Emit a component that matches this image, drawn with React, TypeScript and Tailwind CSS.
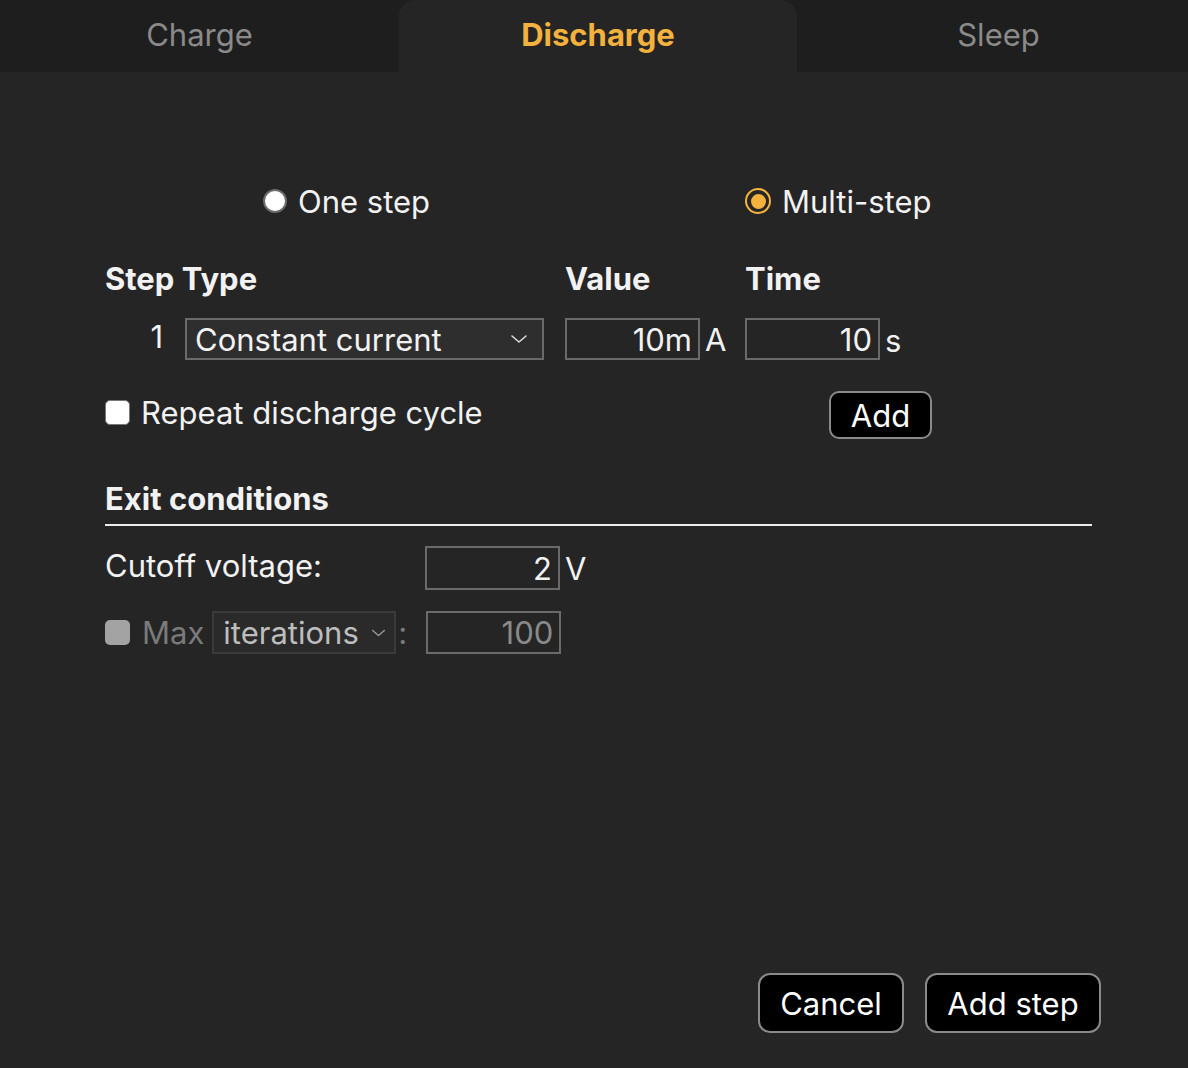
import React from "react";

const Chevron = ({ className = "" }: { className?: string }) => (
  <svg className={className} width="18" height="10" viewBox="0 0 18 10" fill="none">
    <path d="M2 2 L9 8 L16 2" stroke="currentColor" strokeWidth="1.6" strokeLinecap="round" strokeLinejoin="round" />
  </svg>
);

export default function App() {
  return (
    <div
      className="min-h-[1068px] w-[1188px] bg-[#252525] text-[#f2f2f2] flex flex-col"
      style={{ fontFamily: "Inter, 'Noto Sans', sans-serif" }}
    >
      {/* Tabs */}
      <div className="flex h-[72px] bg-[#1e1e1e] shrink-0">
        <div className="w-[399px] flex items-center justify-center text-[31px] text-[#8a8a8a] pb-[2px]">Charge</div>
        <div className="w-[398px] flex items-center justify-center text-[31px] font-bold text-[#f3b13e] bg-[#252525] rounded-t-[16px] pb-[2px]">Discharge</div>
        <div className="flex-1 flex items-center justify-center text-[31px] text-[#8a8a8a] pb-[2px] pl-[12px]">Sleep</div>
      </div>

      <div className="flex-1 flex flex-col pl-[105px] pr-[96px]">
        {/* Radios */}
        <div className="flex items-center h-[40px] mt-[109px]">
          <div className="ml-[158px] w-[482px] flex items-center">
            <span className="w-[24px] h-[24px] rounded-full bg-white border-2 border-[#6b6b6b]" />
            <span className="ml-[11px] text-[31px] leading-none">One step</span>
          </div>
          <div className="flex items-center">
            <span className="w-[26px] h-[26px] rounded-full border-[2.5px] border-[#f3b13e] flex items-center justify-center">
              <span className="w-[15px] h-[15px] rounded-full bg-[#f3b13e]" />
            </span>
            <span className="ml-[11px] text-[31px] leading-none">Multi-step</span>
          </div>
        </div>

        {/* Header */}
        <div className="flex items-center h-[40px] mt-[38px] text-[31px] font-bold">
          <div className="w-[460px]">Step Type</div>
          <div className="w-[180px]">Value</div>
          <div>Time</div>
        </div>

        {/* Step row */}
        <div className="flex items-center mt-[19px] h-[42px] text-[31px]">
          <div className="w-[80px] text-right pr-[22px] leading-none -mt-[6px]">1</div>
          <div className="w-[359px] h-[42px] border-2 border-[#6a6a6a] bg-[#2e2e2e] flex items-center pl-[8px] pr-[14px]">
            <span className="flex-1 leading-none">Constant current</span>
            <Chevron className="text-[#dcdcdc]" />
          </div>
          <div className="ml-[21px] w-[135px] h-[42px] border-2 border-[#6a6a6a] flex items-center justify-end pr-[6px] leading-none">10m</div>
          <div className="w-[45px] pl-[5px] leading-none">A</div>
          <div className="w-[135px] h-[42px] border-2 border-[#6a6a6a] flex items-center justify-end pr-[6px] leading-none">10</div>
          <div className="pl-[5px] leading-none mt-[2px]">s</div>
        </div>

        {/* Repeat row */}
        <div className="flex items-center mt-[31px] h-[48px]">
          <div className="w-[724px] flex items-center -mt-[6px]">
            <span className="w-[25px] h-[25px] rounded-[5px] bg-white border border-[#777]" />
            <span className="ml-[11px] text-[31px] leading-none">Repeat discharge cycle</span>
          </div>
          <button className="w-[103px] h-[48px] bg-black border-2 border-[#8a8a8a] rounded-[10px] text-[31px] leading-none text-white">Add</button>
        </div>

        {/* Exit conditions */}
        <div className="mt-[44px] text-[31px] font-bold leading-none">Exit conditions</div>
        <div className="mt-[10px] h-[2px] bg-[#ececec] w-[987px]" />

        {/* Cutoff voltage */}
        <div className="flex items-center mt-[20px] h-[44px] text-[31px]">
          <div className="w-[320px] leading-none -mt-[6px]">Cutoff voltage:</div>
          <div className="w-[135px] h-[44px] border-2 border-[#6a6a6a] flex items-center justify-end pr-[6px] leading-none">2</div>
          <div className="pl-[5px] leading-none">V</div>
        </div>

        {/* Max iterations */}
        <div className="flex items-center mt-[21px] h-[43px] text-[31px]">
          <span className="w-[25px] h-[25px] rounded-[5px] bg-[#a3a3a3]" />
          <span className="ml-[12px] leading-none text-[#7a7a7a]">Max</span>
          <div className="ml-[8px] w-[184px] h-[43px] border-2 border-[#3b3b3b] bg-[#2a2a2a] flex items-center pl-[9px] pr-[8px]">
            <span className="flex-1 leading-none text-[#bdbdbd]">iterations</span>
            <Chevron className="text-[#9a9a9a] w-[15px]" />
          </div>
          <span className="ml-[2px] w-[28px] leading-none text-[#7a7a7a]">:</span>
          <div className="w-[135px] h-[43px] border-2 border-[#6a6a6a] flex items-center justify-end pr-[6px] leading-none text-[#8a8a8a]">100</div>
        </div>

        {/* Footer buttons */}
        <div className="mt-auto flex justify-end gap-[21px] pb-[35px] mr-[-9px]">
          <button className="w-[146px] h-[60px] bg-black border-2 border-[#8a8a8a] rounded-[12px] text-[31px] leading-none text-white">Cancel</button>
          <button className="w-[176px] h-[60px] bg-black border-2 border-[#8a8a8a] rounded-[12px] text-[31px] leading-none text-white">Add step</button>
        </div>
      </div>
    </div>
  );
}
